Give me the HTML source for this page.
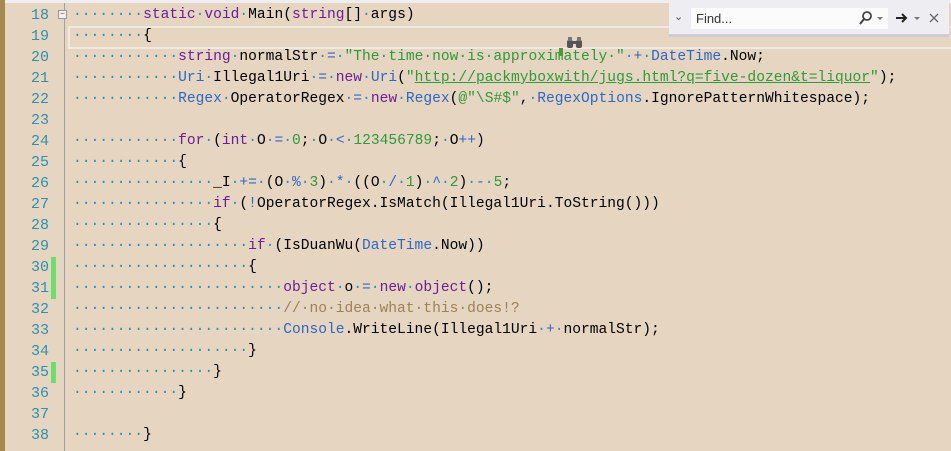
<!DOCTYPE html>
<html style="overflow:hidden;height:451px"><head><meta charset="utf-8"><style>
html,body{overflow:hidden;}
body{margin:0;width:951px;height:451px;background:#e5d5c1;position:relative;overflow:hidden;font-family:"Liberation Mono",monospace;}
#top{position:absolute;left:0;top:0;width:951px;height:3px;background:#eeeef2;}
#lbar{position:absolute;left:0;top:0;width:5px;height:451px;background:#a8894d;}
#sep{position:absolute;left:64px;top:3px;width:1px;height:448px;background:#a0a0a0;}
.ln{position:absolute;left:0;width:49px;text-align:right;color:#2b91af;font-size:15px;line-height:21px;height:21px;}
.cl{position:absolute;left:73px;font-size:14.6px;line-height:21px;height:21px;white-space:pre;color:#000;}
.d{color:#2b91af}.k{color:#6a1f96}.t{color:#2e67c5}.s{color:#2f9a3a}.u{color:#2f9a3a;text-decoration:underline}.o{color:#2e67c5}.c{color:#9a8356}.n{color:#2f9a3a}
.g{position:absolute;left:51px;width:5px;background:#6cde6c;}
#cur{position:absolute;left:68px;top:26px;width:890px;height:19px;border:2px solid #f0e9e0;}
#find{position:absolute;left:669px;top:3px;width:280px;height:31px;background:#eeeef2;border-bottom:3px solid #ccccd6;}
#inp{position:absolute;left:691px;top:8px;width:197px;height:21px;background:#fbfbfb;font-family:"Liberation Sans",sans-serif;font-size:13px;line-height:21px;color:#333;padding-left:5px;box-sizing:border-box;}
.fold{position:absolute;left:58px;top:10px;width:7px;height:7px;border:1px solid #999;font-size:8px;line-height:7px;text-align:center;color:#555;background:#f5f0ea}
</style></head><body>
<div id="top"></div><div id="lbar"></div><div id="sep"></div>
<div class="fold">−</div>
<div id="cur"></div>
<div class="g" style="top:257px;height:42px"></div>
<div class="g" style="top:362px;height:21px"></div>

<div class="ln" style="top:5px">18</div><div class="cl" style="top:5px"><span class="d">········</span><span class="k">static</span><span class="d">·</span><span class="k">void</span><span class="d">·</span>Main(<span class="k">string</span>[]<span class="d">·</span>args)</div>
<div class="ln" style="top:26px">19</div><div class="cl" style="top:26px"><span class="d">········</span>{</div>
<div class="ln" style="top:47px">20</div><div class="cl" style="top:47px"><span class="d">············</span><span class="k">string</span><span class="d">·</span>normalStr<span class="d">·</span><span class="o">=</span><span class="d">·</span><span class="s">"The·time·now·is·approximately·"</span><span class="d">·</span><span class="o">+</span><span class="d">·</span><span class="t">DateTime</span>.Now;</div>
<div class="ln" style="top:68px">21</div><div class="cl" style="top:68px"><span class="d">············</span><span class="t">Uri</span><span class="d">·</span>Illegal1Uri<span class="d">·</span><span class="o">=</span><span class="d">·</span><span class="k">new</span><span class="d">·</span><span class="t">Uri</span>(<span class="s">"</span><span class="u">http://packmyboxwith/jugs.html?q=five-dozen&amp;t=liquor</span><span class="s">"</span>);</div>
<div class="ln" style="top:89px">22</div><div class="cl" style="top:89px"><span class="d">············</span><span class="t">Regex</span><span class="d">·</span>OperatorRegex<span class="d">·</span><span class="o">=</span><span class="d">·</span><span class="k">new</span><span class="d">·</span><span class="t">Regex</span>(<span class="s">@"\S#$"</span>,<span class="d">·</span><span class="t">RegexOptions</span>.IgnorePatternWhitespace);</div>
<div class="ln" style="top:110px">23</div>
<div class="ln" style="top:131px">24</div><div class="cl" style="top:131px"><span class="d">············</span><span class="k">for</span><span class="d">·</span>(<span class="k">int</span><span class="d">·</span>O<span class="d">·</span><span class="o">=</span><span class="d">·</span><span class="n">0</span>;<span class="d">·</span>O<span class="d">·</span><span class="o">&lt;</span><span class="d">·</span><span class="n">123456789</span>;<span class="d">·</span>O<span class="o">++</span>)</div>
<div class="ln" style="top:152px">25</div><div class="cl" style="top:152px"><span class="d">············</span>{</div>
<div class="ln" style="top:173px">26</div><div class="cl" style="top:173px"><span class="d">················</span>_I<span class="d">·</span><span class="o">+=</span><span class="d">·</span>(O<span class="d">·</span><span class="o">%</span><span class="d">·</span><span class="n">3</span>)<span class="d">·</span><span class="o">*</span><span class="d">·</span>((O<span class="d">·</span><span class="o">/</span><span class="d">·</span><span class="n">1</span>)<span class="d">·</span><span class="o">^</span><span class="d">·</span><span class="n">2</span>)<span class="d">·</span><span class="o">-</span><span class="d">·</span><span class="n">5</span>;</div>
<div class="ln" style="top:194px">27</div><div class="cl" style="top:194px"><span class="d">················</span><span class="k">if</span><span class="d">·</span>(<span class="o">!</span>OperatorRegex.IsMatch(Illegal1Uri.ToString()))</div>
<div class="ln" style="top:215px">28</div><div class="cl" style="top:215px"><span class="d">················</span>{</div>
<div class="ln" style="top:236px">29</div><div class="cl" style="top:236px"><span class="d">····················</span><span class="k">if</span><span class="d">·</span>(IsDuanWu(<span class="t">DateTime</span>.Now))</div>
<div class="ln" style="top:257px">30</div><div class="cl" style="top:257px"><span class="d">····················</span>{</div>
<div class="ln" style="top:278px">31</div><div class="cl" style="top:278px"><span class="d">························</span><span class="k">object</span><span class="d">·</span>o<span class="d">·</span><span class="o">=</span><span class="d">·</span><span class="k">new</span><span class="d">·</span><span class="k">object</span>();</div>
<div class="ln" style="top:299px">32</div><div class="cl" style="top:299px"><span class="d">························</span><span class="c">//·no·idea·what·this·does!?</span></div>
<div class="ln" style="top:320px">33</div><div class="cl" style="top:320px"><span class="d">························</span><span class="t">Console</span>.WriteLine(Illegal1Uri<span class="d">·</span><span class="o">+</span><span class="d">·</span>normalStr);</div>
<div class="ln" style="top:341px">34</div><div class="cl" style="top:341px"><span class="d">····················</span>}</div>
<div class="ln" style="top:362px">35</div><div class="cl" style="top:362px"><span class="d">················</span>}</div>
<div class="ln" style="top:383px">36</div><div class="cl" style="top:383px"><span class="d">············</span>}</div>
<div class="ln" style="top:404px">37</div>
<div class="ln" style="top:425px">38</div><div class="cl" style="top:425px"><span class="d">········</span>}</div>

<svg style="position:absolute;left:566px;top:36px" width="18" height="14"><rect x="1" y="4" width="6" height="8" rx="2" fill="#555"/><rect x="10" y="4" width="6" height="8" rx="2" fill="#555"/><rect x="6" y="5" width="5" height="3" fill="#555"/><rect x="2" y="1" width="4" height="4" fill="#777"/><rect x="11" y="1" width="4" height="4" fill="#777"/></svg>
<div style="position:absolute;left:559px;top:48px;width:4px;height:8px;background:#4a9a3a"></div>

<div id="find"></div>
<div style="position:absolute;left:674px;top:10px;font-size:11px;color:#555;font-family:'Liberation Sans',sans-serif">⌄</div>
<div id="inp">Find...</div>
<svg style="position:absolute;left:858px;top:10px" width="30" height="16"><circle cx="9" cy="6" r="4" fill="none" stroke="#444" stroke-width="1.8"/><line x1="6" y1="9" x2="2" y2="14" stroke="#444" stroke-width="2"/><path d="M19 7h6l-3 3z" fill="#777"/></svg>
<svg style="position:absolute;left:894px;top:10px" width="56" height="16"><path d="M2 8h10M8 4l4 4-4 4" fill="none" stroke="#222" stroke-width="2"/><path d="M20 7h6l-3 3z" fill="#777"/><path d="M36 4l8 8M44 4l-8 8" stroke="#666" stroke-width="1.3"/></svg>
</body></html>
